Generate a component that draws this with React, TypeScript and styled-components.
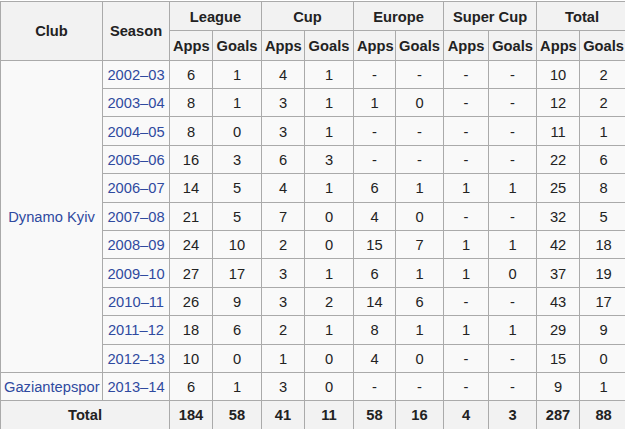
import React from 'react';
import styled, { createGlobalStyle } from 'styled-components';

type Cell = number | '-';

interface Season {
  season: string;
  stats: Cell[];
}

const dynamo: Season[] = [
  { season: '2002–03', stats: [6, 1, 4, 1, '-', '-', '-', '-', 10, 2] },
  { season: '2003–04', stats: [8, 1, 3, 1, 1, 0, '-', '-', 12, 2] },
  { season: '2004–05', stats: [8, 0, 3, 1, '-', '-', '-', '-', 11, 1] },
  { season: '2005–06', stats: [16, 3, 6, 3, '-', '-', '-', '-', 22, 6] },
  { season: '2006–07', stats: [14, 5, 4, 1, 6, 1, 1, 1, 25, 8] },
  { season: '2007–08', stats: [21, 5, 7, 0, 4, 0, '-', '-', 32, 5] },
  { season: '2008–09', stats: [24, 10, 2, 0, 15, 7, 1, 1, 42, 18] },
  { season: '2009–10', stats: [27, 17, 3, 1, 6, 1, 1, 0, 37, 19] },
  { season: '2010–11', stats: [26, 9, 3, 2, 14, 6, '-', '-', 43, 17] },
  { season: '2011–12', stats: [18, 6, 2, 1, 8, 1, 1, 1, 29, 9] },
  { season: '2012–13', stats: [10, 0, 1, 0, 4, 0, '-', '-', 15, 0] },
];

const gaziantep: Season = {
  season: '2013–14',
  stats: [6, 1, 3, 0, '-', '-', '-', '-', 9, 1],
};

const totals = [184, 58, 41, 11, 58, 16, 4, 3, 287, 88];

const competitions = ['League', 'Cup', 'Europe', 'Super Cup', 'Total'];

// column widths measured off the screenshot
const colWidths = [102, 67, 43, 49, 43, 49, 42, 48, 45, 48, 43, 48];

const GlobalStyle = createGlobalStyle`
  body {
    margin: 0;
    background: #fff;
    overflow: hidden;
    font-family: "Liberation Sans", Arial, sans-serif;
  }
`;

const Table = styled.table`
  margin-top: 1px;
  border-collapse: collapse;
  table-layout: fixed;
  width: 627px;
  background: #f9f9f9;
  color: #222;
  font-size: 14.7px;
  border: 1px solid #aaa;
`;

const HeadRow = styled.tr`
  height: 29.3px;
`;

const BodyRow = styled.tr`
  height: 28.4px;
`;

const Th = styled.th`
  background: #f2f2f2;
  border: 1px solid #aaa;
  padding: 1px 3px 0;
  font-weight: bold;
  text-align: center;
  white-space: nowrap;
`;

const Td = styled.td<{ $bold?: boolean }>`
  border: 1px solid #aaa;
  padding: 1px 3px 0;
  text-align: center;
  white-space: nowrap;
  font-weight: ${(p) => (p.$bold ? 'bold' : 'normal')};
`;

const TotalTd = styled(Td)`
  background: #f2f2f2;
`;

const Link = styled.a`
  color: #2f4a9f;
  text-decoration: none;
`;

const StatCells = ({ stats }: { stats: Cell[] }) => (
  <>
    {stats.map((v, i) => (
      <Td key={i}>{v}</Td>
    ))}
  </>
);

const App = (): JSX.Element => {
  return (
    <>
      <GlobalStyle />
      <Table>
        <colgroup>
          {colWidths.map((w, i) => (
            <col key={i} style={{ width: w }} />
          ))}
        </colgroup>
        <thead>
          <HeadRow>
            <Th rowSpan={2}>Club</Th>
            <Th rowSpan={2}>Season</Th>
            {competitions.map((c) => (
              <Th key={c} colSpan={2}>
                {c}
              </Th>
            ))}
          </HeadRow>
          <HeadRow>
            {competitions.map((c) => (
              <React.Fragment key={c}>
                <Th>Apps</Th>
                <Th>Goals</Th>
              </React.Fragment>
            ))}
          </HeadRow>
        </thead>
        <tbody>
          {dynamo.map((row, i) => (
            <BodyRow key={row.season}>
              {i === 0 && (
                <Td rowSpan={dynamo.length}>
                  <Link href="#">Dynamo Kyiv</Link>
                </Td>
              )}
              <Td>
                <Link href="#">{row.season}</Link>
              </Td>
              <StatCells stats={row.stats} />
            </BodyRow>
          ))}
          <BodyRow>
            <Td>
              <Link href="#">Gaziantepspor</Link>
            </Td>
            <Td>
              <Link href="#">{gaziantep.season}</Link>
            </Td>
            <StatCells stats={gaziantep.stats} />
          </BodyRow>
          <BodyRow>
            <Th colSpan={2}>Total</Th>
            {totals.map((v, i) => (
              <TotalTd key={i} $bold>
                {v}
              </TotalTd>
            ))}
          </BodyRow>
        </tbody>
      </Table>
    </>
  );
};

export default App;
